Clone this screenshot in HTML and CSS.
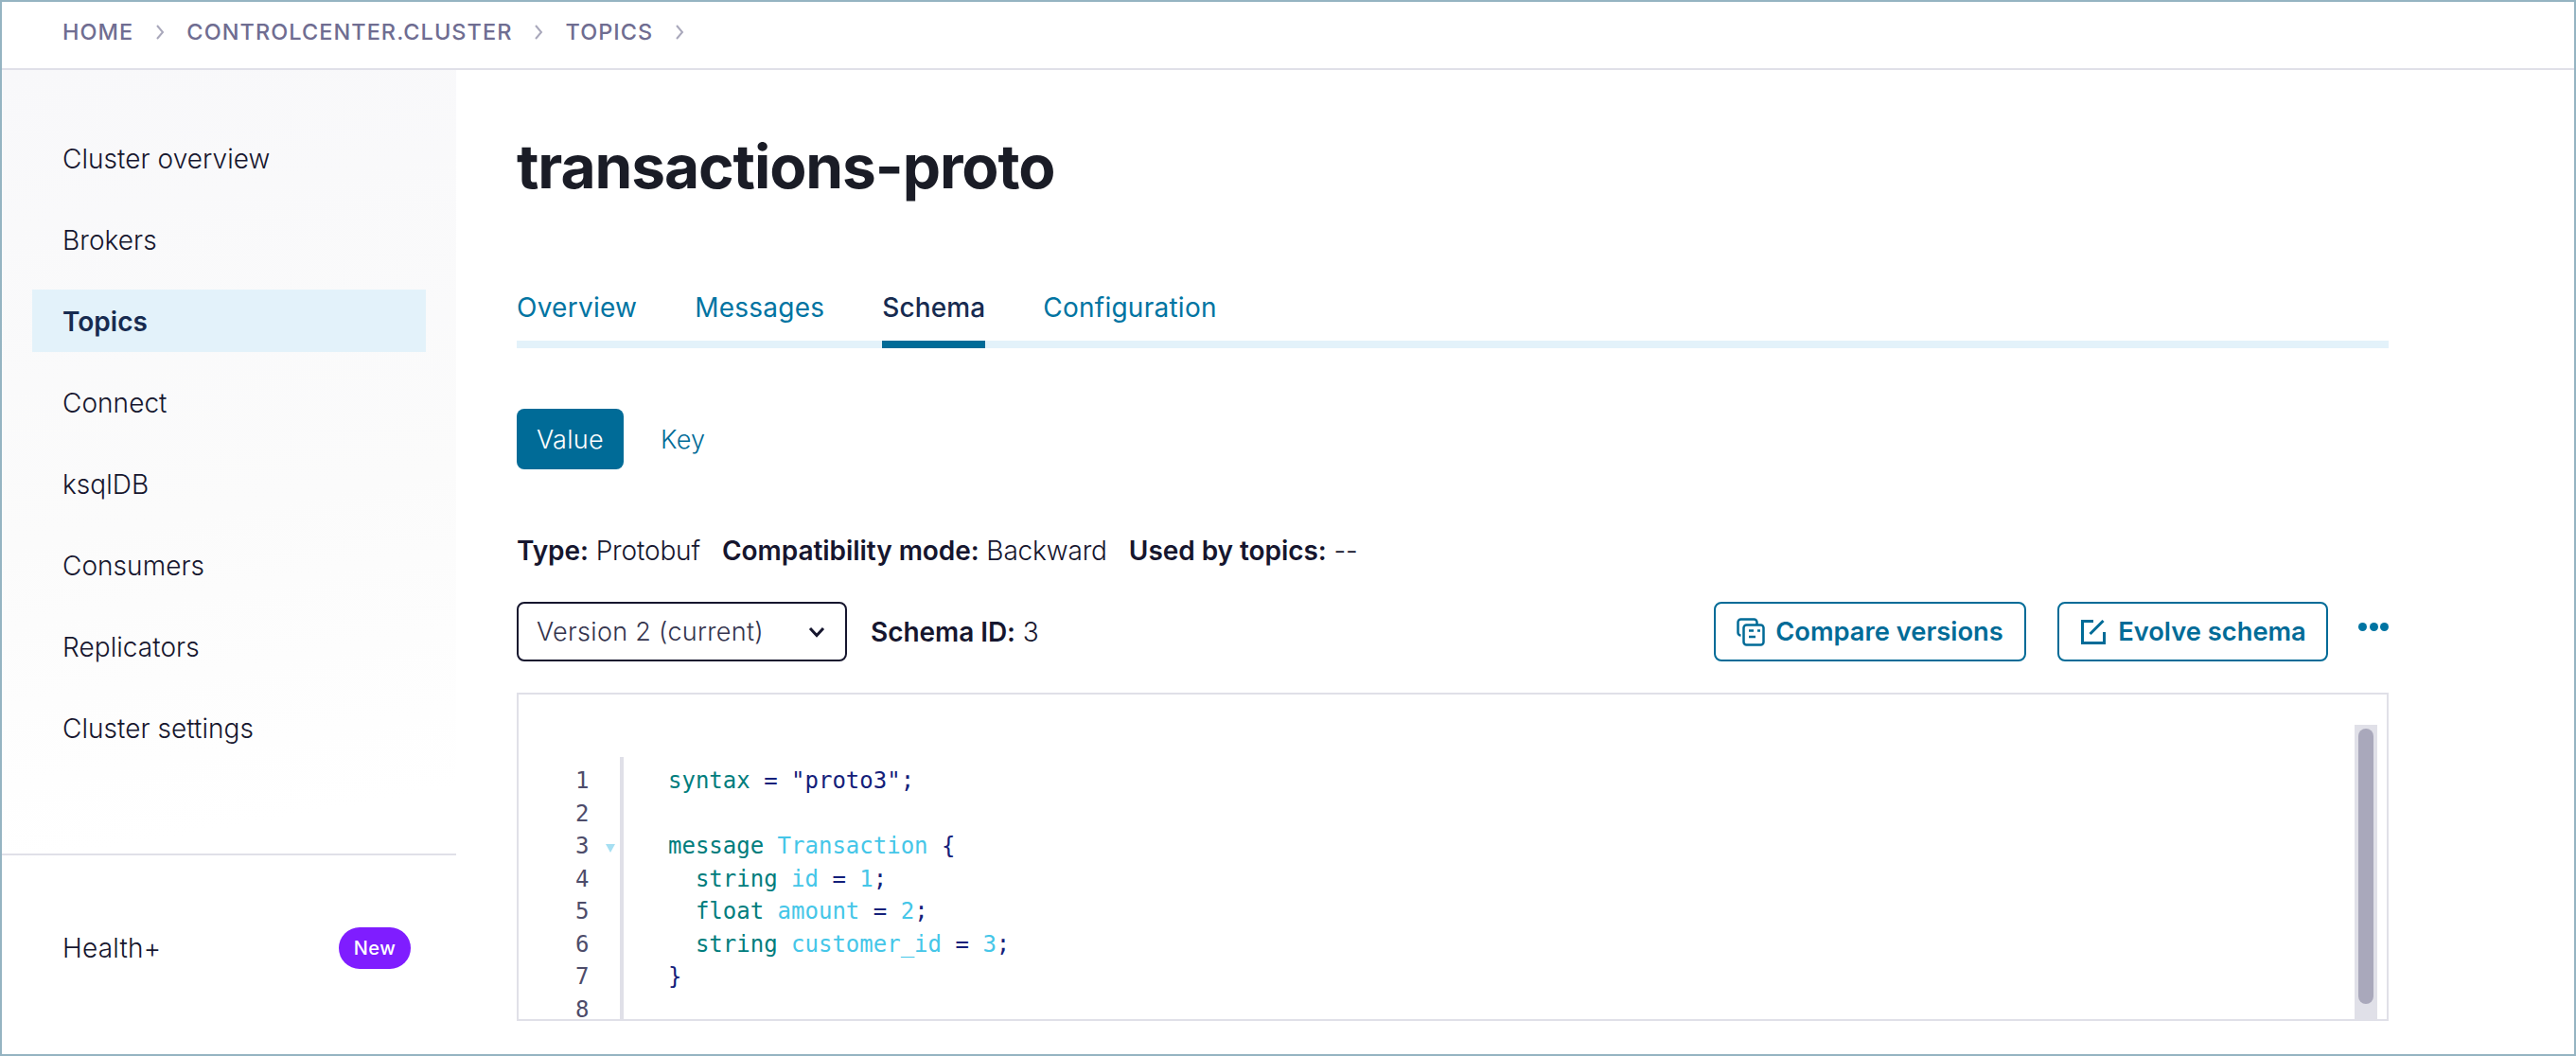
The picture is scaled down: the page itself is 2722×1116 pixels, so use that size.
FILE: index.html
```html
<!DOCTYPE html>
<html lang="en">
<head>
<meta charset="utf-8">
<title>transactions-proto</title>
<link rel="stylesheet" href="styles.css">
</head>
<body>
<div class="frame">
  <header class="crumbs">
    <span class="crumb">HOME</span>
    <svg class="crumb-sep" viewBox="0 0 10 18"><path d="M2 2l6 7-6 7"/></svg>
    <span class="crumb">CONTROLCENTER.CLUSTER</span>
    <svg class="crumb-sep" viewBox="0 0 10 18"><path d="M2 2l6 7-6 7"/></svg>
    <span class="crumb">TOPICS</span>
    <svg class="crumb-sep" viewBox="0 0 10 18"><path d="M2 2l6 7-6 7"/></svg>
  </header>
  <div class="body">
    <aside class="sidebar">
      <nav class="nav">
        <a class="nav-item">Cluster overview</a>
        <a class="nav-item">Brokers</a>
        <a class="nav-item active">Topics</a>
        <a class="nav-item">Connect</a>
        <a class="nav-item">ksqlDB</a>
        <a class="nav-item">Consumers</a>
        <a class="nav-item">Replicators</a>
        <a class="nav-item">Cluster settings</a>
      </nav>
      <div class="side-foot">
        <span class="health">Health+</span>
        <span class="badge">New</span>
      </div>
    </aside>
    <main class="main">
      <h1 class="title">transactions-proto</h1>
      <div class="tabs">
        <a class="tab">Overview</a>
        <a class="tab">Messages</a>
        <a class="tab current">Schema</a>
        <a class="tab">Configuration</a>
      </div>
      <div class="pills">
        <a class="pill on">Value</a>
        <a class="pill">Key</a>
      </div>
      <div class="meta">
        <span><b>Type:</b> Protobuf</span>
        <span><b>Compatibility mode:</b> Backward</span>
        <span><b>Used by topics:</b> --</span>
      </div>
      <div class="toolbar">
        <div class="select">
          <span>Version 2 (current)</span>
          <svg class="chev" viewBox="0 0 18 12"><path d="M2 2l7 7.500L16 2"/></svg>
        </div>
        <span class="schema-id"><b>Schema ID:</b> 3</span>
        <a class="btn compare">
          <svg class="btn-icon" viewBox="0 0 30 30"><path d="M4.500 18.500a3 3 0 0 1-3-3V4.500a3 3 0 0 1 3-3h14a3 3 0 0 1 3 3v2.500"/><rect x="7.500" y="7.500" width="21" height="21" rx="3"/><path d="M13 13.500h5M22 13.500h3M13 20h7"/></svg>
          Compare versions
        </a>
        <a class="btn evolve">
          <svg class="btn-icon" viewBox="0 0 30 30"><path d="M15 3.500H3.500v23h23V15"/><path d="M25.500 3L11.500 17"/></svg>
          Evolve schema
        </a>
        <span class="dots"><i></i><i></i><i></i></span>
      </div>
      <div class="editor">
        <div class="gutter">
          <div class="ln">1</div>
          <div class="ln">2</div>
          <div class="ln fold">3</div>
          <div class="ln">4</div>
          <div class="ln">5</div>
          <div class="ln">6</div>
          <div class="ln">7</div>
          <div class="ln">8</div>
        </div>
        <div class="code">
          <div class="cl"><span class="k">syntax</span> <span class="p">= "proto3";</span></div>
          <div class="cl">&nbsp;</div>
          <div class="cl"><span class="k">message</span> <span class="n">Transaction</span> <span class="p">{</span></div>
          <div class="cl">  <span class="k">string</span> <span class="n">id</span> <span class="p">=</span> <span class="n">1</span><span class="p">;</span></div>
          <div class="cl">  <span class="k">float</span> <span class="n">amount</span> <span class="p">=</span> <span class="n">2</span><span class="p">;</span></div>
          <div class="cl">  <span class="k">string</span> <span class="n">customer_id</span> <span class="p">=</span> <span class="n">3</span><span class="p">;</span></div>
          <div class="cl"><span class="p">}</span></div>
        </div>
        <div class="track"><div class="thumb"></div></div>
      </div>
    </main>
  </div>
</div>
</body>
</html>
```
FILE: styles.css
```css
* { box-sizing: border-box; }
html, body { margin: 0; padding: 0; background: #fff; }
body { font-family: Inter, "Liberation Sans", sans-serif; color: #16162e; }
.frame { width: 2722px; height: 1116px; border: 2px solid #95b4c2; display: flex; flex-direction: column; overflow: hidden; background: #fff; }
.crumbs { height: 72px; flex: none; border-bottom: 2px solid #e0e0e8; padding: 0 0 7px 64px; display: flex; align-items: center; }
.crumb { font-size: 23.500px; font-weight: 500; letter-spacing: 1.050px; color: #6f6d91; }
.crumb-sep { width: 10px; height: 18px; margin: 0 23px; fill: none; stroke: #a9a8bb; stroke-width: 2; }
.body { flex: 1; display: flex; min-height: 0; }
.sidebar { width: 480px; flex: none; display: flex; flex-direction: column; background: linear-gradient(170deg, #f8f8fa 0%, #fbfbfb 45%, #fff 75%); }
.nav { padding: 60px 32px 0; display: flex; flex-direction: column; gap: 20px; }
.nav-item { height: 66px; padding: 2px 0 0 32px; display: flex; align-items: center; font-size: 28px; font-weight: 300; letter-spacing: 0.050px; color: #16162e; }
.nav-item.active { background: #e3f2fa; font-weight: 600; color: #172b50; letter-spacing: 0; }
.side-foot { margin-top: 100px; border-top: 2px solid #e0e0e8; padding: 76px 48px 0 64px; display: flex; justify-content: space-between; align-items: center; }
.health { font-size: 28px; font-weight: 300; letter-spacing: 0.200px; }
.badge { width: 76px; height: 44px; border-radius: 22px; background: #7f1dff; color: #fff; font-size: 20px; font-weight: 500; letter-spacing: 0.500px; display: flex; align-items: center; justify-content: center; }
.main { flex: none; width: 2042px; padding: 0 0 0 64px; }
.main > * { width: 1978px; }
.title { margin: 56px 0 0; font-size: 64px; line-height: 92px; font-weight: 700; letter-spacing: -1.100px; color: #1a1c26; }
.tabs { margin-top: 77px; display: flex; gap: 61px; border-bottom: 8px solid #e3f2fa; height: 69px; }
.tab { height: 69px; font-size: 28px; line-height: 52px; color: #0074a2; letter-spacing: 0.250px; font-weight: 400; }
.tab.current { color: #172b50; border-bottom: 8px solid #006b97; font-weight: 500; letter-spacing: 0.100px; }
.pills { margin-top: 64px; display: flex; gap: 39px; align-items: center; height: 64px; }
.pill { font-size: 27px; font-weight: 300; color: #006b97; letter-spacing: 0.300px; }
.pill.on { width: 113px; height: 64px; background: #006b97; color: #fff; border-radius: 8px; display: flex; align-items: center; justify-content: center; }
.meta { margin-top: 64px; display: flex; gap: 23px; font-size: 28px; line-height: 44px; font-weight: 300; letter-spacing: -0.150px; }
.meta b, .schema-id b { font-weight: 600; letter-spacing: -0.050px; }
.toolbar { margin-top: 32px; height: 63px; display: flex; align-items: center; }
.select { width: 349px; height: 63px; border: 2px solid #16162e; border-radius: 8px; padding: 0 21px 0 19px; display: flex; align-items: center; justify-content: space-between; font-size: 27px; font-weight: 300; letter-spacing: 0.300px; color: #33334d; }
.chev { width: 18px; height: 12px; fill: none; stroke: #16162e; stroke-width: 3; }
.schema-id { margin-left: 25px; font-size: 28px; font-weight: 300; }
.btn { height: 63px; border: 2px solid #006b97; border-radius: 8px; display: flex; align-items: center; justify-content: center; gap: 11px; font-size: 27.300px; font-weight: 600; color: #006b97; }
.compare { width: 330px; margin-left: auto; }
.evolve { width: 286px; margin-left: 33px; }
.btn-icon { width: 30px; height: 30px; fill: none; stroke: #006b97; stroke-width: 2.500; }
.evolve .btn-icon { stroke-width: 3; }
.dots { margin-left: 32px; width: 32px; display: flex; justify-content: space-between; align-self: flex-start; margin-top: 22px; }
.dots i { width: 9px; height: 9px; border-radius: 50%; background: #0074a2; }
.editor { margin-top: 33px; height: 347px; border: 2px solid #e0e0e8; display: flex; position: relative; overflow: hidden; }
.gutter { margin-top: 66px; padding-top: 8px; width: 111px; flex: none; border-right: 4px solid #e0e0e8; height: 300px; }
.ln { height: 34.500px; line-height: 34.500px; font-family: "DejaVu Sans Mono", monospace; font-size: 24px; color: #4d4c6a; padding-left: 60px; position: relative; }
.fold::after { content: ""; position: absolute; left: 92px; top: 15px; border-left: 5px solid transparent; border-right: 5px solid transparent; border-top: 9px solid #a6dff2; }
.code { margin-top: 74px; margin-left: 47px; flex: 1; font-family: "DejaVu Sans Mono", monospace; font-size: 24px; }
.cl { height: 34.500px; line-height: 34.500px; white-space: pre; }
.k { color: #007d7d; }
.n { color: #45c6e8; }
.p { color: #14207a; }
.track { position: absolute; right: 10px; top: 32px; bottom: 0; width: 24px; background: #e0e0e8; padding: 4px; }
.thumb { width: 16px; height: 291px; background: #a9a8bb; border-radius: 8px; }
```
